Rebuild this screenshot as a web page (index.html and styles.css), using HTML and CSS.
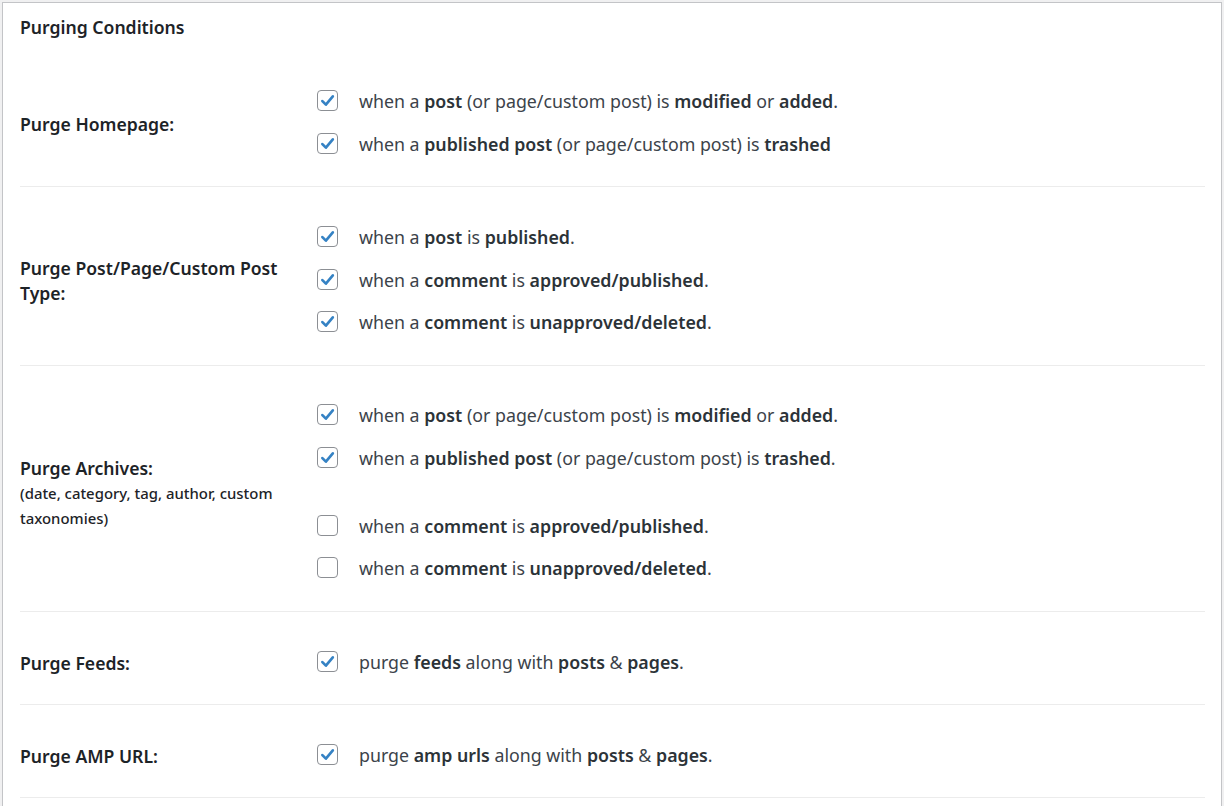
FILE: index.html
```html
<!DOCTYPE html>
<html>
<head>
<meta charset="utf-8">
<link rel="stylesheet" href="styles.css">
</head>
<body>
<div class="panel">
  <h3 class="title">Purging Conditions</h3>

  <div class="row">
    <div class="label">Purge Homepage:</div>
    <div class="opts">
      <div class="opt"><span class="cb on"><svg viewBox="0 0 20 20"><path d="M4.6 10.6l3.7 3.8L15.6 5.6"/></svg></span><span class="txt">when a <b>post</b> (or page/custom post) is <b>modified</b> or <b>added</b>.</span></div>
      <div class="opt"><span class="cb on"><svg viewBox="0 0 20 20"><path d="M4.6 10.6l3.7 3.8L15.6 5.6"/></svg></span><span class="txt">when a <b>published post</b> (or page/custom post) is <b>trashed</b></span></div>
    </div>
  </div>

  <div class="row">
    <div class="label">Purge Post/Page/Custom Post Type:</div>
    <div class="opts">
      <div class="opt"><span class="cb on"><svg viewBox="0 0 20 20"><path d="M4.6 10.6l3.7 3.8L15.6 5.6"/></svg></span><span class="txt">when a <b>post</b> is <b>published</b>.</span></div>
      <div class="opt"><span class="cb on"><svg viewBox="0 0 20 20"><path d="M4.6 10.6l3.7 3.8L15.6 5.6"/></svg></span><span class="txt">when a <b>comment</b> is <b>approved/published</b>.</span></div>
      <div class="opt"><span class="cb on"><svg viewBox="0 0 20 20"><path d="M4.6 10.6l3.7 3.8L15.6 5.6"/></svg></span><span class="txt">when a <b>comment</b> is <b>unapproved/deleted</b>.</span></div>
    </div>
  </div>

  <div class="row">
    <div class="label">Purge Archives:<small>(date, category, tag, author, custom taxonomies)</small></div>
    <div class="opts">
      <div class="opt"><span class="cb on"><svg viewBox="0 0 20 20"><path d="M4.6 10.6l3.7 3.8L15.6 5.6"/></svg></span><span class="txt">when a <b>post</b> (or page/custom post) is <b>modified</b> or <b>added</b>.</span></div>
      <div class="opt"><span class="cb on"><svg viewBox="0 0 20 20"><path d="M4.6 10.6l3.7 3.8L15.6 5.6"/></svg></span><span class="txt">when a <b>published post</b> (or page/custom post) is <b>trashed</b>.</span></div>
      <div class="opt gap"><span class="cb"></span><span class="txt">when a <b>comment</b> is <b>approved/published</b>.</span></div>
      <div class="opt"><span class="cb"></span><span class="txt">when a <b>comment</b> is <b>unapproved/deleted</b>.</span></div>
    </div>
  </div>

  <div class="row">
    <div class="label">Purge Feeds:</div>
    <div class="opts">
      <div class="opt"><span class="cb on"><svg viewBox="0 0 20 20"><path d="M4.6 10.6l3.7 3.8L15.6 5.6"/></svg></span><span class="txt">purge <b>feeds</b> along with <b>posts</b> &amp; <b>pages</b>.</span></div>
    </div>
  </div>

  <div class="row">
    <div class="label">Purge AMP URL:</div>
    <div class="opts">
      <div class="opt"><span class="cb on"><svg viewBox="0 0 20 20"><path d="M4.6 10.6l3.7 3.8L15.6 5.6"/></svg></span><span class="txt">purge <b>amp urls</b> along with <b>posts</b> &amp; <b>pages</b>.</span></div>
    </div>
  </div>
</div>
</body>
</html>
```

FILE: styles.css
```css
html, body {
  margin: 0;
  padding: 0;
  background: #f0f0f1;
}
body {
  padding: 2px 2px 0 2px;
  font-family: "Noto Sans", "Open Sans", sans-serif;
  color: #3c434a;
  font-size: 17.8px;
}
.panel {
  background: #fff;
  border: 1px solid #c3c4c7;
  padding: 0 16px 0 17px;
  min-height: 820px;
  box-sizing: border-box;
}
.title {
  margin: 0;
  height: 48.5px;
  line-height: 48px;
  font-size: 17.6px;
  font-weight: 600;
  color: #1d2327;
}
.row {
  display: grid;
  grid-template-columns: 297px 1fr;
  padding: 28px 0 21.8px;
  border-bottom: 1px solid #ececec;
}
.label {
  align-self: center;
  padding-top: 4px;
  font-size: 17.6px;
  font-weight: 600;
  color: #1d2327;
  line-height: 25px;
  padding-right: 20px;
}
.label small {
  display: block;
  font-size: 14.9px;
  font-weight: 500;
}
.opts {
  display: flex;
  flex-direction: column;
}
.opt {
  height: 42.5px;
  display: flex;
  align-items: center;
}
.opt.gap {
  margin-top: 25.5px;
}
.cb {
  width: 21px;
  height: 21px;
  box-sizing: border-box;
  border: 1px solid #8c8f94;
  border-radius: 4px;
  background: #fff;
  margin-right: 21px;
  flex: none;
  display: flex;
}
.cb svg {
  width: 19px;
  height: 19px;
}
.cb svg path {
  fill: none;
  stroke: #3582c4;
  stroke-width: 2.8;
  stroke-linecap: round;
  stroke-linejoin: round;
}
.txt {
  padding-top: 1px;
}
.txt b {
  font-weight: 600;
  color: #2c3338;
}
```
